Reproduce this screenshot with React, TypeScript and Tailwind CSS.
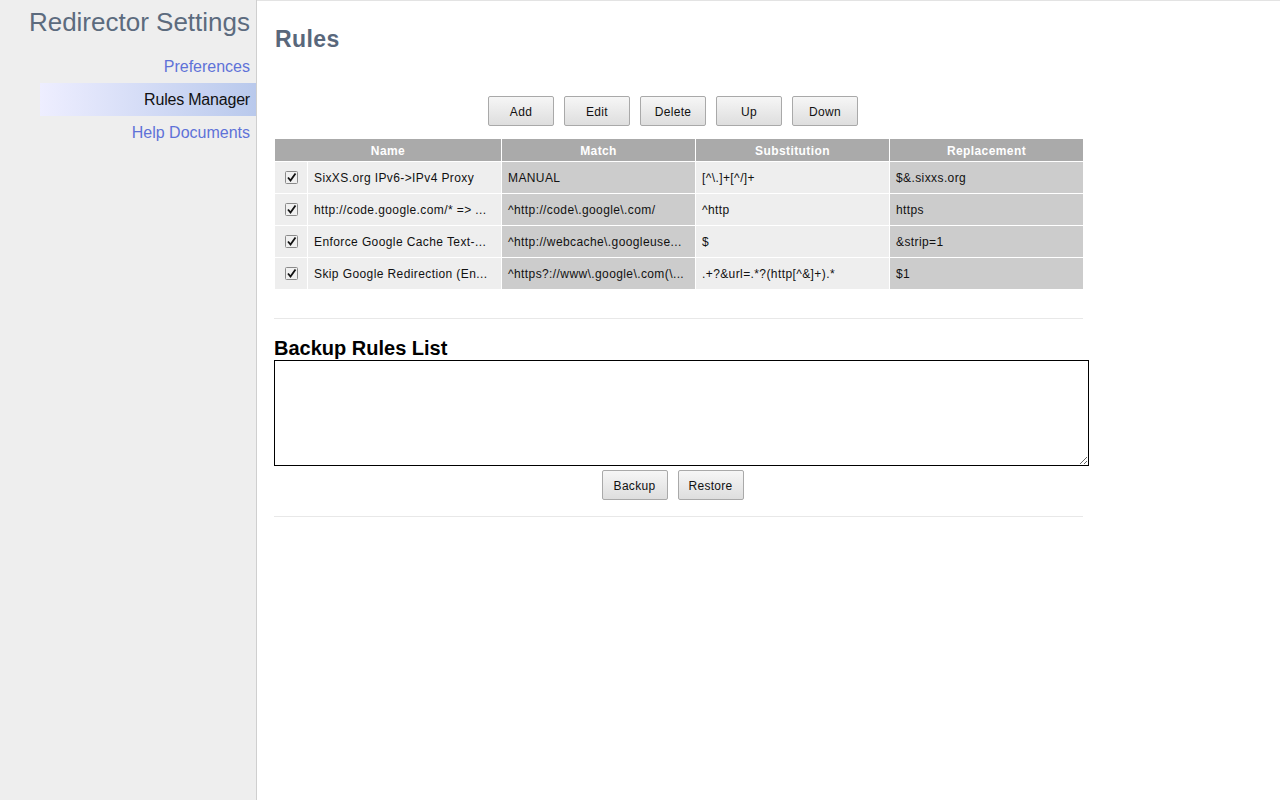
import React from "react";

const rows = [
  ["SixXS.org IPv6->IPv4 Proxy", "MANUAL", "[^\\.]+[^/]+", "$&.sixxs.org"],
  ["http://code.google.com/* => ...", "^http://code\\.google\\.com/", "^http", "https"],
  ["Enforce Google Cache Text-...", "^http://webcache\\.googleuse...", "$", "&strip=1"],
  ["Skip Google Redirection (En...", "^https?://www\\.google\\.com(\\...", ".+?&url=.*?(http[^&]+).*", "$1"],
];

function Btn({ children }: { children: React.ReactNode }) {
  return (
    <button className="w-[66px] h-[30px] rounded-[2px] border border-[#a9a9a9] bg-gradient-to-b from-[#f6f6f6] to-[#dedede] text-[12px] text-[#111] tracking-[0.3px] pt-px">
      {children}
    </button>
  );
}

function Check() {
  return (
    <svg width="13" height="13" viewBox="0 0 13 13">
      <rect x="0.5" y="0.5" width="12" height="12" rx="1" fill="#f0f0f0" stroke="#8a8a8a" />
      <path d="M3 6.5 L5.5 9.5 L10.5 2.5" fill="none" stroke="#111" strokeWidth="1.8" />
    </svg>
  );
}

export default function App() {
  return (
    <div
      className="flex w-[1280px] h-[800px] bg-white"
      style={{ fontFamily: '"Liberation Sans", Arial, sans-serif' }}
    >
      <aside className="w-[257px] shrink-0 bg-[#eeeeee] border-r border-[#cfcfcf] flex flex-col items-end">
        <h1 className="text-[26px] leading-[30px] text-[#5c6b7e] pr-[6px] pt-[7px] mb-[13px]">Redirector Settings</h1>
        <div className="h-[33px] w-[216px] flex items-center justify-end pr-[6px] text-[16px] text-[#5e72d8]">Preferences</div>
        <div className="h-[33px] w-[216px] flex items-center justify-end pr-[6px] text-[16px] tracking-[-0.2px] text-[#111] bg-gradient-to-r from-[#eeeeff] to-[#b9c9ec]">Rules Manager</div>
        <div className="h-[33px] w-[216px] flex items-center justify-end pr-[6px] text-[16px] text-[#5e72d8]">Help Documents</div>
      </aside>
      <main className="flex-1 border-t border-[#e3e3e3] pl-[17px]">
        <h2 className="text-[23px] font-bold text-[#59677b] leading-[26px] mt-[25px] ml-px tracking-[0.4px]">Rules</h2>
        <div className="w-[809px] flex justify-center gap-[10px] mt-[44px] pr-[11px]">
          <Btn>Add</Btn>
          <Btn>Edit</Btn>
          <Btn>Delete</Btn>
          <Btn>Up</Btn>
          <Btn>Down</Btn>
        </div>
        <div className="ml-[1px] mt-[13px] w-[808px] grid grid-cols-[32px_193px_193px_193px_193px] gap-px bg-white text-[12px] tracking-[0.4px]">
          <div className="col-span-2 h-[22px] bg-[#aaaaaa] text-white font-bold flex items-center justify-center pt-px">Name</div>
          <div className="h-[22px] bg-[#aaaaaa] text-white font-bold flex items-center justify-center pt-px">Match</div>
          <div className="h-[22px] bg-[#aaaaaa] text-white font-bold flex items-center justify-center pt-px">Substitution</div>
          <div className="h-[22px] bg-[#aaaaaa] text-white font-bold flex items-center justify-center pt-px">Replacement</div>
          {rows.map((r, i) => (
            <React.Fragment key={i}>
              <div className="h-[31px] bg-[#eeeeee] flex items-center justify-center"><Check /></div>
              <div className="h-[31px] bg-[#eeeeee] flex items-center px-[6px] text-[#111] whitespace-nowrap overflow-hidden">{r[0]}</div>
              <div className="h-[31px] bg-[#cccccc] flex items-center px-[6px] text-[#111] whitespace-nowrap overflow-hidden">{r[1]}</div>
              <div className="h-[31px] bg-[#eeeeee] flex items-center px-[6px] text-[#111] whitespace-nowrap overflow-hidden">{r[2]}</div>
              <div className="h-[31px] bg-[#cccccc] flex items-center px-[6px] text-[#111] whitespace-nowrap overflow-hidden">{r[3]}</div>
            </React.Fragment>
          ))}
        </div>
        <hr className="w-[809px] mt-[29px] border-0 border-t border-[#e8e8e8]" />
        <h3 className="text-[20px] font-bold text-black leading-[22px] mt-[18px]">Backup Rules List</h3>
        <textarea className="block w-[815px] h-[106px] border border-black bg-white mt-[1px] outline-none" />
        <div className="w-[815px] flex justify-center gap-[10px] mt-[4px] pr-[18px]">
          <Btn>Backup</Btn>
          <Btn>Restore</Btn>
        </div>
        <hr className="w-[809px] mt-[16px] border-0 border-t border-[#e8e8e8]" />
      </main>
    </div>
  );
}
